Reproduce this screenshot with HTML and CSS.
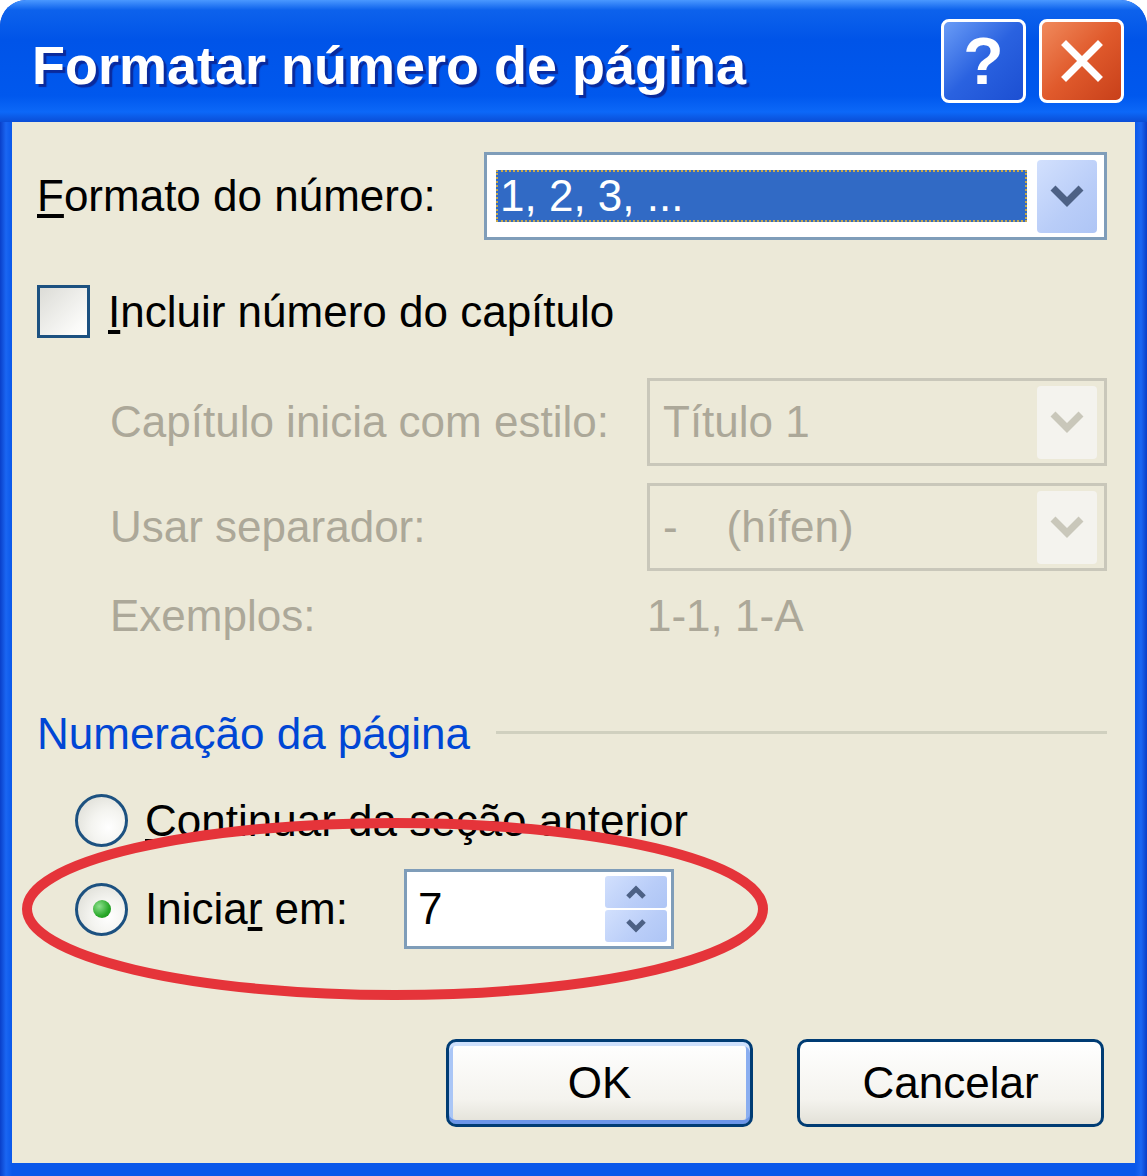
FILE: index.html
```html
<!DOCTYPE html>
<html lang="pt">
<head>
    <meta charset="UTF-8">
    <title>Formatar número de página</title>
    <link rel="stylesheet" href="styles.css">
</head>
<body>
    <div class="window">
        <div class="titlebar">
            <span class="title">Formatar número de página</span>
            <div class="caption-buttons">
                <span class="cap-btn help">?</span>
                <span class="cap-btn close">
                    <svg width="44" height="44" viewBox="0 0 44 44"><path d="M6 6 L38 38 M38 6 L6 38" stroke="#fff" stroke-width="7" stroke-linecap="square"/></svg>
                </span>
            </div>
        </div>

        <div class="client">
            <div class="row format-row">
                <span class="label"><u>F</u>ormato do número:</span>
                <div class="combo">
                    <span class="combo-value selected">1, 2, 3, ...</span>
                    <span class="combo-btn">
                        <svg width="36" height="24" viewBox="0 0 36 24"><polyline points="4,4 18,18 32,4" fill="none" stroke="#4d6185" stroke-width="7"/></svg>
                    </span>
                </div>
            </div>

            <div class="check-row">
                <span class="checkbox"></span>
                <span class="label"><u>I</u>ncluir número do capítulo</span>
            </div>

            <div class="chapter disabled">
                <div class="row sub-row">
                    <span class="label">Capítulo inicia com estilo:</span>
                    <div class="combo">
                        <span class="combo-value">Título 1</span>
                        <span class="combo-btn">
                            <svg width="36" height="24" viewBox="0 0 36 24"><polyline points="4,4 18,18 32,4" fill="none" stroke="#c9c7ba" stroke-width="7"/></svg>
                        </span>
                    </div>
                </div>
                <div class="row sub-row sep-row">
                    <span class="label">Usar separador:</span>
                    <div class="combo">
                        <span class="combo-value">-&nbsp;&nbsp;&nbsp;&nbsp;(hífen)</span>
                        <span class="combo-btn">
                            <svg width="36" height="24" viewBox="0 0 36 24"><polyline points="4,4 18,18 32,4" fill="none" stroke="#c9c7ba" stroke-width="7"/></svg>
                        </span>
                    </div>
                </div>
                <div class="row sub-row example-row">
                    <span class="label">Exemplos:</span>
                    <span class="label">1-1, 1-A</span>
                </div>
            </div>

            <div class="group-head">
                <span>Numeração da página</span>
                <span class="rule"></span>
            </div>

            <div class="radio-row first">
                <span class="radio"></span>
                <span class="label"><u>C</u>ontinuar da seção anterior</span>
            </div>

            <div class="radio-row second">
                <span class="radio checked"></span>
                <span class="label start-label">Inicia<u>r</u> em:</span>
                <div class="spin">
                    <span class="spin-value">7</span>
                    <span class="spin-btns">
                        <span class="spin-btn"><svg width="22" height="14" viewBox="0 0 22 14"><polyline points="3,12 11,4 19,12" fill="none" stroke="#4d6185" stroke-width="5"/></svg></span>
                        <span class="spin-btn"><svg width="22" height="14" viewBox="0 0 22 14"><polyline points="3,2 11,10 19,2" fill="none" stroke="#4d6185" stroke-width="5"/></svg></span>
                    </span>
                </div>
            </div>

            <div class="buttons">
                <button class="btn default">OK</button>
                <button class="btn">Cancelar</button>
            </div>

            <svg class="annotation" width="746" height="182" viewBox="0 0 746 182">
                <ellipse cx="373" cy="91" rx="368" ry="86" fill="none" stroke="#e5343a" stroke-width="10"/>
            </svg>
        </div>
    </div>
</body>
</html>
```

FILE: styles.css
```css
* {
    box-sizing: border-box;
}

body {
    margin: 0;
    background: #fff;
    font-family: "Liberation Sans", Arial, sans-serif;
}

.window {
    width: 1147px;
    height: 1176px;
    border-radius: 26px 26px 0 0;
    background: linear-gradient(to right, #0a3fc8 0, #1a66f2 6px, #0a58ea 12px, #0a58ea 1135px, #1a66f2 1141px, #0a3fc8 1147px);
    display: flex;
    flex-direction: column;
    overflow: hidden;
}

.titlebar {
    height: 122px;
    flex: none;
    display: flex;
    align-items: center;
    justify-content: space-between;
    padding: 0 23px 0 32px;
    background: linear-gradient(#4a98ff 0, #0d62ec 10px, #0054e8 40px, #0058ee 96px, #0c68f8 112px, #0a4dd6 122px);
    border-radius: 26px 26px 0 0;
}

.title {
    color: #fff;
    font-weight: bold;
    font-size: 54px;
    text-shadow: 3px 3px 1px #0a2a9c;
    margin-top: 8px;
}

.caption-buttons {
    display: flex;
    gap: 13px;
}

.cap-btn {
    width: 85px;
    height: 84px;
    border: 3px solid #fff;
    border-radius: 8px;
    display: flex;
    align-items: center;
    justify-content: center;
    color: #fff;
}

.help {
    background: linear-gradient(135deg, #6a9cf6, #2a62e0 50%, #1c4fd2);
    font-size: 66px;
    font-weight: bold;
    font-family: "Liberation Sans", Arial, sans-serif;
}

.close {
    background: linear-gradient(135deg, #f08a5c, #e05a2c 50%, #c8401a);
}

.client {
    position: relative;
    flex: 1;
    margin: 0 12px 13px;
    background: #ece9d8;
    padding: 30px 28px 0 25px;
    font-size: 44px;
    color: #000;
}

.row {
    display: grid;
    grid-template-columns: 447px 1fr;
    align-items: center;
    height: 88px;
}

.combo {
    height: 88px;
    border: 3px solid #7f9db9;
    background: #fff;
    display: flex;
    align-items: center;
    padding: 0 7px 0 9px;
    gap: 10px;
}

.combo-value {
    flex: 1;
    height: 52px;
    line-height: 52px;
    padding-left: 4px;
}

.combo-value.selected {
    background: #316ac5;
    color: #fff;
    outline: 2px dotted #c9a94a;
    outline-offset: -2px;
}

.combo-btn {
    width: 60px;
    height: 73px;
    border-radius: 4px;
    background: linear-gradient(135deg, #d2e0fd, #b9cdf8 60%, #aec5f5);
    display: flex;
    align-items: center;
    justify-content: center;
}

.check-row {
    display: flex;
    align-items: center;
    gap: 18px;
    margin-top: 45px;
    height: 53px;
}

.checkbox {
    width: 53px;
    height: 53px;
    border: 3px solid #1c5180;
    background: linear-gradient(135deg, #dcdcd7, #fafaf8 80%, #fff);
}

.chapter {
    margin-left: 73px;
    margin-top: 40px;
}

.disabled {
    color: #aca899;
}

.sub-row {
    grid-template-columns: 537px 1fr;
}

.disabled .combo {
    border-color: #c9c7ba;
    background: #ece9d8;
}

.disabled .combo-btn {
    background: #f4f3ee;
}

.sep-row {
    margin-top: 17px;
}

.example-row {
    margin-top: 20px;
    height: 50px;
}

.group-head {
    display: flex;
    align-items: center;
    gap: 26px;
    margin-top: 68px;
    height: 50px;
    color: #0046d5;
}

.rule {
    flex: 1;
    height: 3px;
    background: #d0d0bf;
    margin-top: -4px;
}

.radio-row {
    display: flex;
    align-items: center;
    margin-left: 38px;
    gap: 17px;
}

.radio-row.first {
    margin-top: 35px;
    height: 53px;
}

.radio-row.second {
    margin-top: 22px;
    height: 80px;
}

.radio {
    width: 53px;
    height: 53px;
    border: 3px solid #1c5180;
    border-radius: 50%;
    background: radial-gradient(circle at 65% 65%, #fff 0, #f4f4f0 40%, #d8d8d0 100%);
    display: flex;
    align-items: center;
    justify-content: center;
}

.radio.checked::after {
    content: "";
    width: 18px;
    height: 18px;
    border-radius: 50%;
    background: radial-gradient(circle at 35% 35%, #8ee08e, #28a828 60%, #1a8a1a);
}

.start-label {
    width: 242px;
}

.spin {
    width: 270px;
    height: 80px;
    border: 3px solid #7f9db9;
    background: #fff;
    display: flex;
    align-items: center;
    padding: 0 4px 0 11px;
}

.spin-value {
    flex: 1;
}

.spin-btns {
    width: 62px;
    height: 66px;
    display: flex;
    flex-direction: column;
    gap: 2px;
}

.spin-btn {
    flex: 1;
    border-radius: 3px;
    background: linear-gradient(135deg, #d2e0fd, #b9cdf8 60%, #aec5f5);
    display: flex;
    align-items: center;
    justify-content: center;
}

.buttons {
    display: flex;
    justify-content: flex-end;
    gap: 44px;
    margin-top: 90px;
    margin-right: 3px;
}

.btn {
    width: 307px;
    height: 88px;
    border: 3px solid #003c74;
    border-radius: 10px;
    background: linear-gradient(#ffffff, #f4f3ee 70%, #e3e1d8);
    font-family: "Liberation Sans", Arial, sans-serif;
    font-size: 44px;
    color: #000;
    padding: 0;
}

.btn.default {
    box-shadow: inset 0 4px 0 #cee0fc, inset 0 -4px 0 #6b95e8, inset 4px 0 0 #aac6f6, inset -4px 0 0 #8aaef0;
}

.annotation {
    position: absolute;
    left: 10px;
    top: 696px;
}
```
